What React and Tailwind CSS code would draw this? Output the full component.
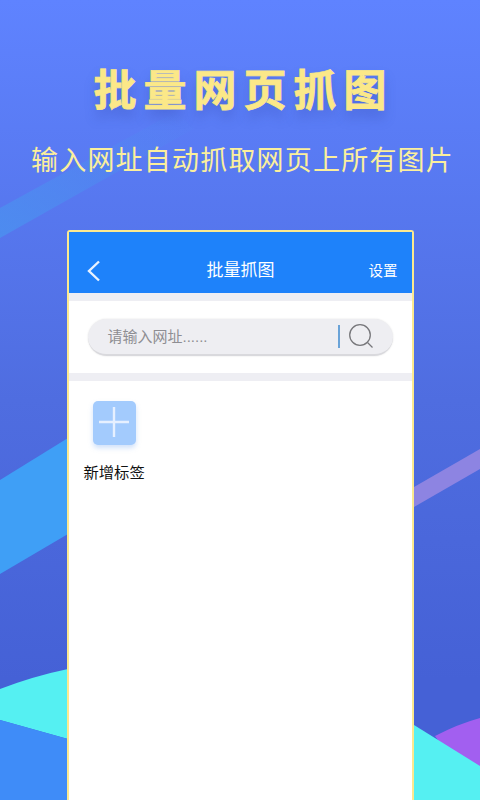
const Background = () => (
  <svg className="absolute inset-0 w-full h-full" viewBox="0 0 480 800">
    <defs>
      <linearGradient id="bg" x1="0" y1="0" x2="0" y2="1">
        <stop offset="0" stopColor="#5f83ff" />
        <stop offset="0.5" stopColor="#4f6de0" />
        <stop offset="0.85" stopColor="#4561d6" />
      </linearGradient>
      <linearGradient id="band" x1="0" y1="1" x2="1" y2="0">
        <stop offset="0" stopColor="#4a93f0" stopOpacity="0.75" />
        <stop offset="1" stopColor="#4a93f0" stopOpacity="0" />
      </linearGradient>
    </defs>
    <rect width="480" height="800" fill="url(#bg)" />
    <polygon points="0,208 175,112 195,128 0,238" fill="url(#band)" />
    <polygon points="0,480 68,438 68,534 0,574" fill="#3f9ff6" />
    <polygon points="414,487 480,449 480,469 414,507" fill="#8d84e2" />
    <path d="M0,689 Q34,676 68,669 L68,739 L0,720 Z" fill="#55f0f2" />
    <path d="M0,720 L68,739 L68,800 L0,800 Z" fill="#3f8cf8" />
    <path d="M435,736 Q458,724 480,718 L480,800 Z" fill="#a25ff0" />
    <path d="M414,725 L480,766 L480,800 L414,800 Z" fill="#55f0f2" />
  </svg>
);

const App = () => (
  <div className="relative w-[480px] h-[800px] overflow-hidden font-['Liberation_Sans','Noto_Sans_CJK_SC',sans-serif]">
    <Background />
    <div className="relative flex flex-col items-center h-full">
      <h1 className="mt-[63px] h-[56px] pl-[7px] text-[43px] leading-[56px] font-bold tracking-[7px] text-[#fbe888] [-webkit-text-stroke:0.8px_#fbe888] [text-shadow:0_8px_12px_rgba(50,70,170,0.35)] whitespace-nowrap">批量网页抓图</h1>
      <p className="mt-[26px] h-[32px] pl-[5px] text-[27px] leading-[32px] tracking-[1.2px] text-[#fbef9c] whitespace-nowrap">输入网址自动抓取网页上所有图片</p>
      <div className="mt-[53px] w-[347px] flex-1 flex flex-col bg-white border-2 border-b-0 border-[#fbe98f] rounded-t-[3px]">
        <div className="h-[61px] shrink-0 bg-[#1e82fa] flex items-end justify-between pb-[11px] pl-[17px] pr-[14px] text-white">
          <svg width="16" height="22" viewBox="0 0 16 22" fill="none" stroke="#e8f2ff" strokeWidth="2.4"><path d="M13 1.5 L3 11 L13 20.5" /></svg>
          <span className="text-[17px] leading-[22px] ml-[11px]">批量抓图</span>
          <span className="text-[14.5px] leading-[22px]">设置</span>
        </div>
        <div className="h-[8px] shrink-0 bg-[#eeeef3]" />
        <div className="h-[72px] shrink-0 flex items-center pl-[19px]">
          <div className="w-[305px] h-[37px] rounded-full bg-[#eeeef2] border-b-2 border-[#d9d9dd] shadow-[0_0_2px_rgba(0,0,0,0.12)] flex items-center pl-[20px] pr-[20px]">
            <span className="flex-1 text-[15px] leading-[22px] pt-[1px] text-[#8e8e93] whitespace-nowrap">请输入网址......</span>
            <div className="w-[2px] h-[23px] bg-[#6aa3d8] mr-[9px]" />
            <svg width="24" height="24" viewBox="0 0 24 24" fill="none" stroke="#77777b" strokeWidth="1.3"><circle cx="11" cy="11" r="10.3" /><path d="M18.5 18.5 L23.5 23.5" /></svg>
          </div>
        </div>
        <div className="h-[8px] shrink-0 bg-[#eeeef3]" />
        <div className="pt-[20px] pl-[15px] w-fit flex flex-col items-center">
          <div className="w-[43px] h-[44px] rounded-[5px] bg-[#a3cbfd] shadow-[0_3px_5px_rgba(120,170,240,0.35)] flex items-center justify-center pb-[3px]">
            <svg width="30" height="30" viewBox="0 0 30 30" stroke="#e6f0ff" strokeWidth="2.4"><path d="M15 0 V30 M0 15 H30" /></svg>
          </div>
          <span className="mt-[17px] text-[15.3px] leading-[22px] text-[#111] whitespace-nowrap">新增标签</span>
        </div>
      </div>
    </div>
  </div>
);

export default App;
